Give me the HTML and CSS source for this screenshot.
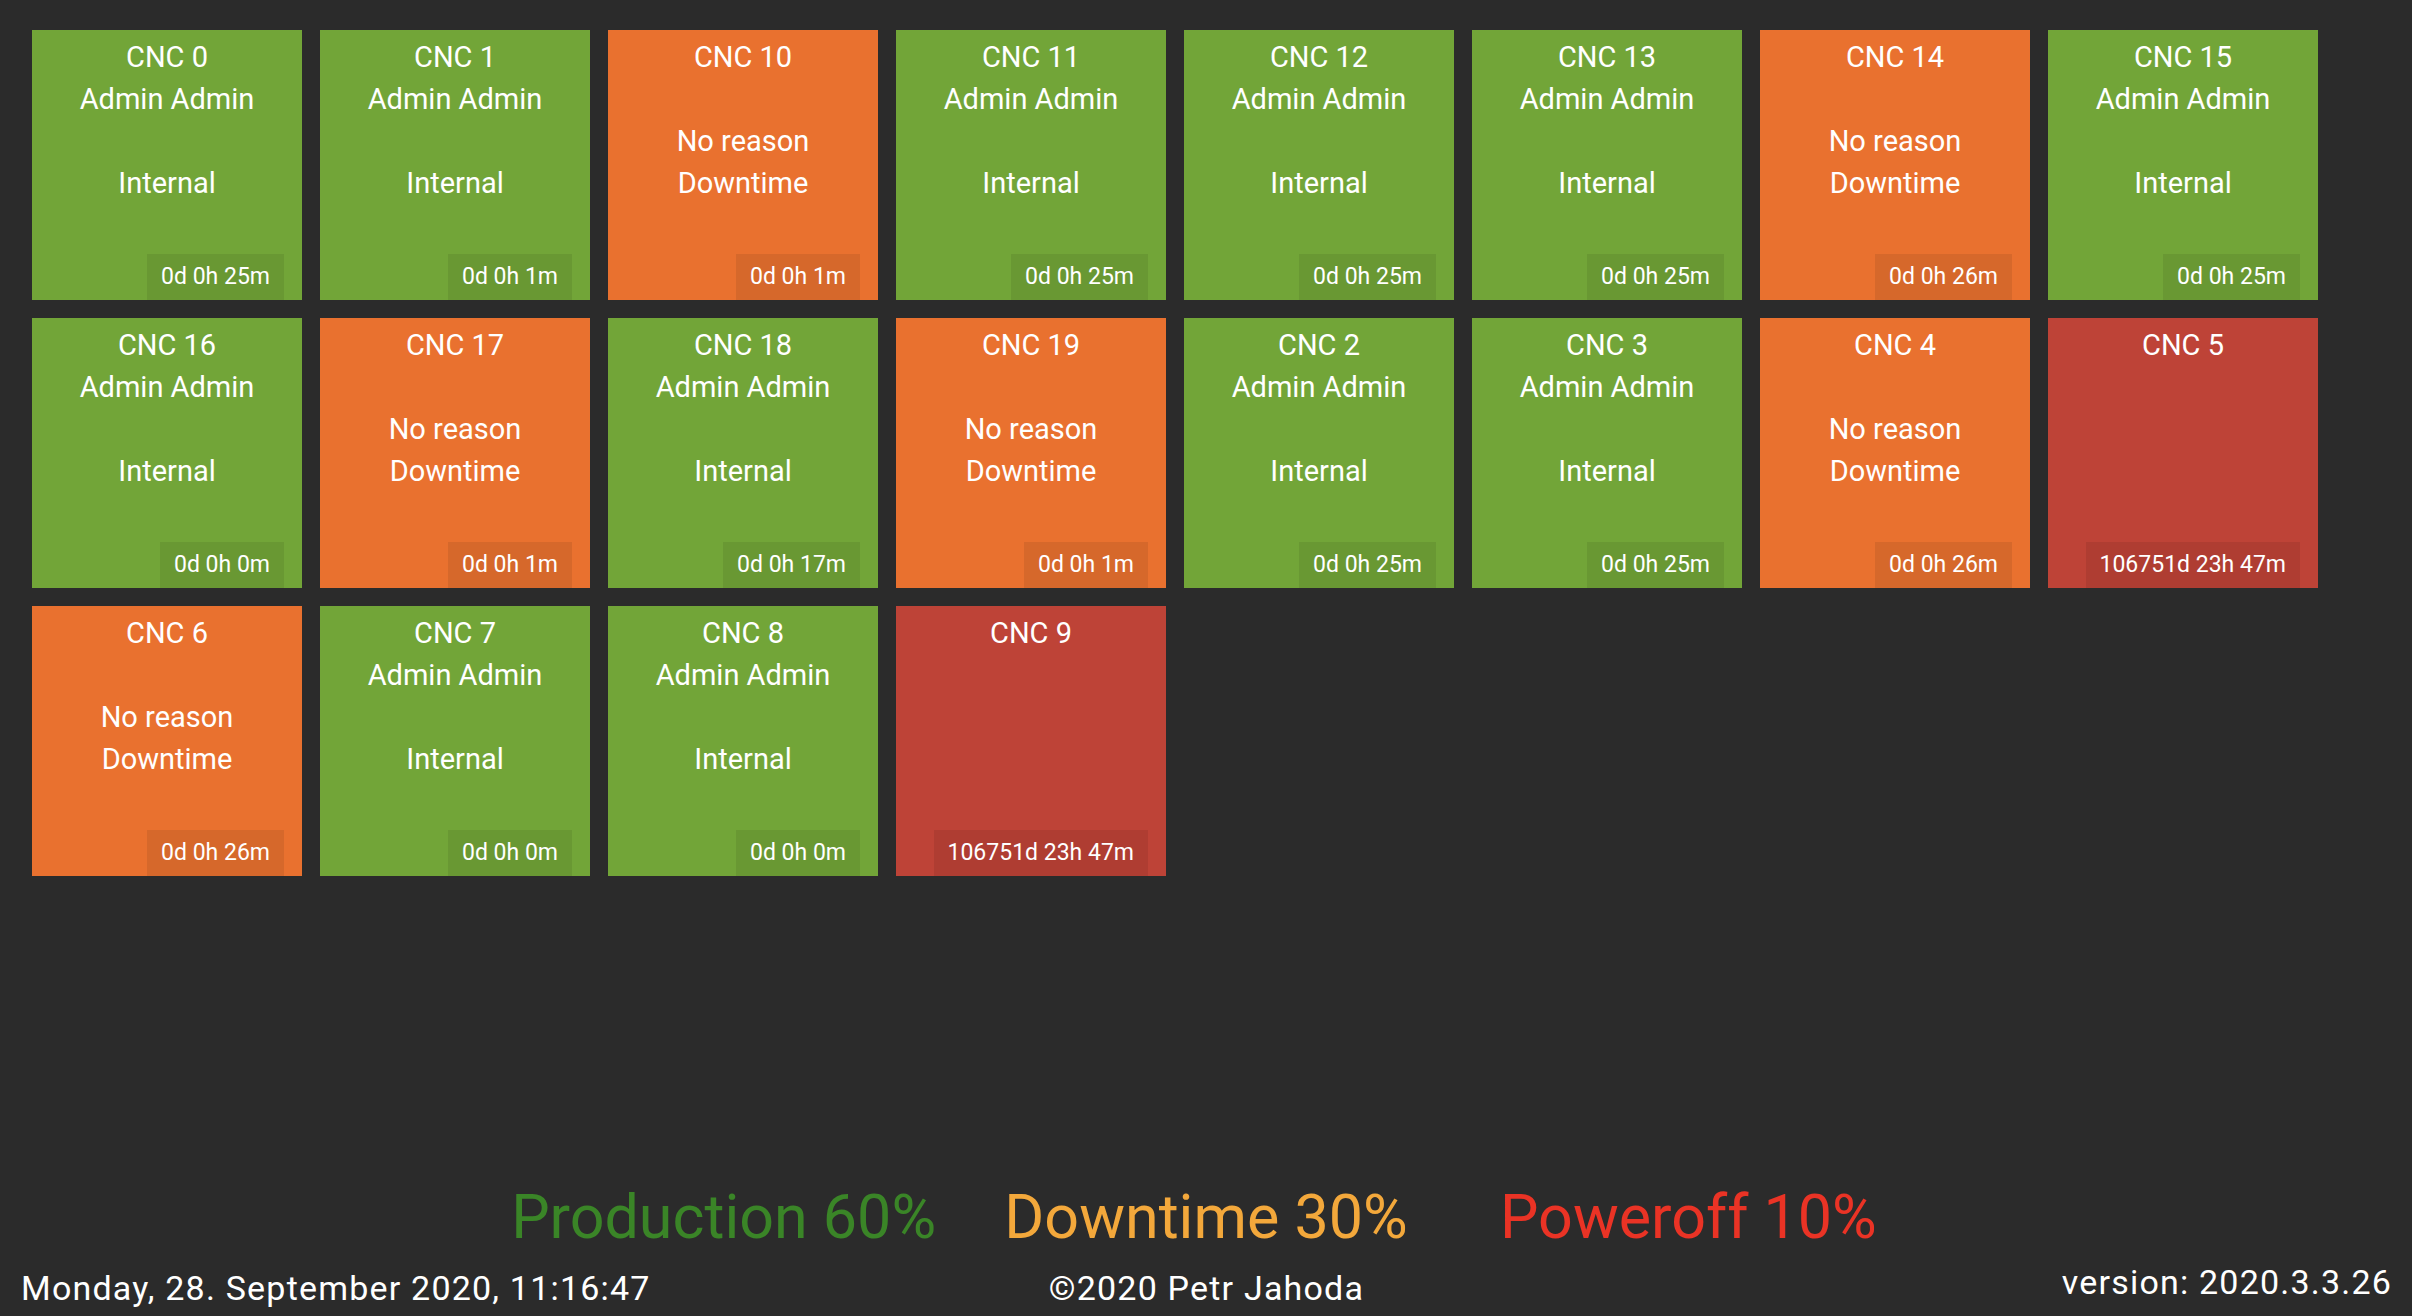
FILE: index.html
```html
<!DOCTYPE html>
<html lang="en">
<head>
    <meta charset="UTF-8">
    <meta name="viewport" content="width=device-width, initial-scale=1.0">
    <title>CNC Dashboard</title>
    <link rel="stylesheet" href="styles.css">
</head>
<body>
    <div class="machines">
        <div class="tile production">
            <div class="line">CNC 0</div><div class="line">Admin Admin</div><div class="line"></div><div class="line">Internal</div>
            <div class="duration">0d 0h 25m</div>
        </div>
        <div class="tile production">
            <div class="line">CNC 1</div><div class="line">Admin Admin</div><div class="line"></div><div class="line">Internal</div>
            <div class="duration">0d 0h 1m</div>
        </div>
        <div class="tile downtime">
            <div class="line">CNC 10</div><div class="line"></div><div class="line">No reason</div><div class="line">Downtime</div>
            <div class="duration">0d 0h 1m</div>
        </div>
        <div class="tile production">
            <div class="line">CNC 11</div><div class="line">Admin Admin</div><div class="line"></div><div class="line">Internal</div>
            <div class="duration">0d 0h 25m</div>
        </div>
        <div class="tile production">
            <div class="line">CNC 12</div><div class="line">Admin Admin</div><div class="line"></div><div class="line">Internal</div>
            <div class="duration">0d 0h 25m</div>
        </div>
        <div class="tile production">
            <div class="line">CNC 13</div><div class="line">Admin Admin</div><div class="line"></div><div class="line">Internal</div>
            <div class="duration">0d 0h 25m</div>
        </div>
        <div class="tile downtime">
            <div class="line">CNC 14</div><div class="line"></div><div class="line">No reason</div><div class="line">Downtime</div>
            <div class="duration">0d 0h 26m</div>
        </div>
        <div class="tile production">
            <div class="line">CNC 15</div><div class="line">Admin Admin</div><div class="line"></div><div class="line">Internal</div>
            <div class="duration">0d 0h 25m</div>
        </div>

        <div class="tile production">
            <div class="line">CNC 16</div><div class="line">Admin Admin</div><div class="line"></div><div class="line">Internal</div>
            <div class="duration">0d 0h 0m</div>
        </div>
        <div class="tile downtime">
            <div class="line">CNC 17</div><div class="line"></div><div class="line">No reason</div><div class="line">Downtime</div>
            <div class="duration">0d 0h 1m</div>
        </div>
        <div class="tile production">
            <div class="line">CNC 18</div><div class="line">Admin Admin</div><div class="line"></div><div class="line">Internal</div>
            <div class="duration">0d 0h 17m</div>
        </div>
        <div class="tile downtime">
            <div class="line">CNC 19</div><div class="line"></div><div class="line">No reason</div><div class="line">Downtime</div>
            <div class="duration">0d 0h 1m</div>
        </div>
        <div class="tile production">
            <div class="line">CNC 2</div><div class="line">Admin Admin</div><div class="line"></div><div class="line">Internal</div>
            <div class="duration">0d 0h 25m</div>
        </div>
        <div class="tile production">
            <div class="line">CNC 3</div><div class="line">Admin Admin</div><div class="line"></div><div class="line">Internal</div>
            <div class="duration">0d 0h 25m</div>
        </div>
        <div class="tile downtime">
            <div class="line">CNC 4</div><div class="line"></div><div class="line">No reason</div><div class="line">Downtime</div>
            <div class="duration">0d 0h 26m</div>
        </div>
        <div class="tile poweroff">
            <div class="line">CNC 5</div>
            <div class="duration">106751d 23h 47m</div>
        </div>

        <div class="tile downtime">
            <div class="line">CNC 6</div><div class="line"></div><div class="line">No reason</div><div class="line">Downtime</div>
            <div class="duration">0d 0h 26m</div>
        </div>
        <div class="tile production">
            <div class="line">CNC 7</div><div class="line">Admin Admin</div><div class="line"></div><div class="line">Internal</div>
            <div class="duration">0d 0h 0m</div>
        </div>
        <div class="tile production">
            <div class="line">CNC 8</div><div class="line">Admin Admin</div><div class="line"></div><div class="line">Internal</div>
            <div class="duration">0d 0h 0m</div>
        </div>
        <div class="tile poweroff">
            <div class="line">CNC 9</div>
            <div class="duration">106751d 23h 47m</div>
        </div>
    </div>

    <div class="footer">
        <div class="stats">
            <div class="stat stat-production">Production 60%</div>
            <div class="stat stat-downtime">Downtime 30%</div>
            <div class="stat stat-poweroff">Poweroff 10%</div>
        </div>
        <div class="bottom">
            <div class="clock">Monday, 28. September 2020, 11:16:47</div>
            <div class="copyright">&copy;2020 Petr Jahoda</div>
            <div class="version">version: 2020.3.3.26</div>
        </div>
    </div>
</body>
</html>
```

FILE: styles.css
```css
html, body {
    height: 100%;
}
body {
    margin: 0;
    background-color: #2b2b2b;
    color: #fff;
    font-family: Roboto, "Liberation Sans", Arial, sans-serif;
    display: flex;
    flex-direction: column;
}
.machines {
    display: flex;
    flex-wrap: wrap;
    gap: 18px;
    padding: 30px 0 0 32px;
}
.tile {
    width: 270px;
    height: 270px;
    box-sizing: border-box;
    padding-top: 6px;
    display: flex;
    flex-direction: column;
    text-align: center;
    font-size: 29px;
    line-height: 42px;
}
.tile .line {
    min-height: 42px;
}
.production {
    background-color: #72a538;
}
.downtime {
    background-color: #e9712f;
}
.poweroff {
    background-color: #be4337;
}
.duration {
    margin-top: auto;
    margin-right: 18px;
    align-self: flex-end;
    padding: 0 14px;
    font-size: 23px;
    line-height: 46px;
    background-color: rgba(0, 0, 0, 0.08);
}
.footer {
    margin-top: auto;
}
.stats {
    display: flex;
    justify-content: center;
    font-size: 61px;
    line-height: 73px;
}
.stat {
    width: 20%;
    text-align: center;
}
.stat-production {
    color: #3a8527;
}
.stat-downtime {
    color: #f3a83b;
}
.stat-poweroff {
    color: #ea3325;
}
.bottom {
    display: flex;
    justify-content: space-between;
    align-items: flex-end;
    margin-top: 8px;
    padding: 0 20px 8px 21px;
    font-size: 34px;
    line-height: 40px;
    letter-spacing: 1.2px;
}
.clock,
.version {
    flex: 1;
}
.version {
    text-align: right;
    padding-bottom: 6px;
}
```
